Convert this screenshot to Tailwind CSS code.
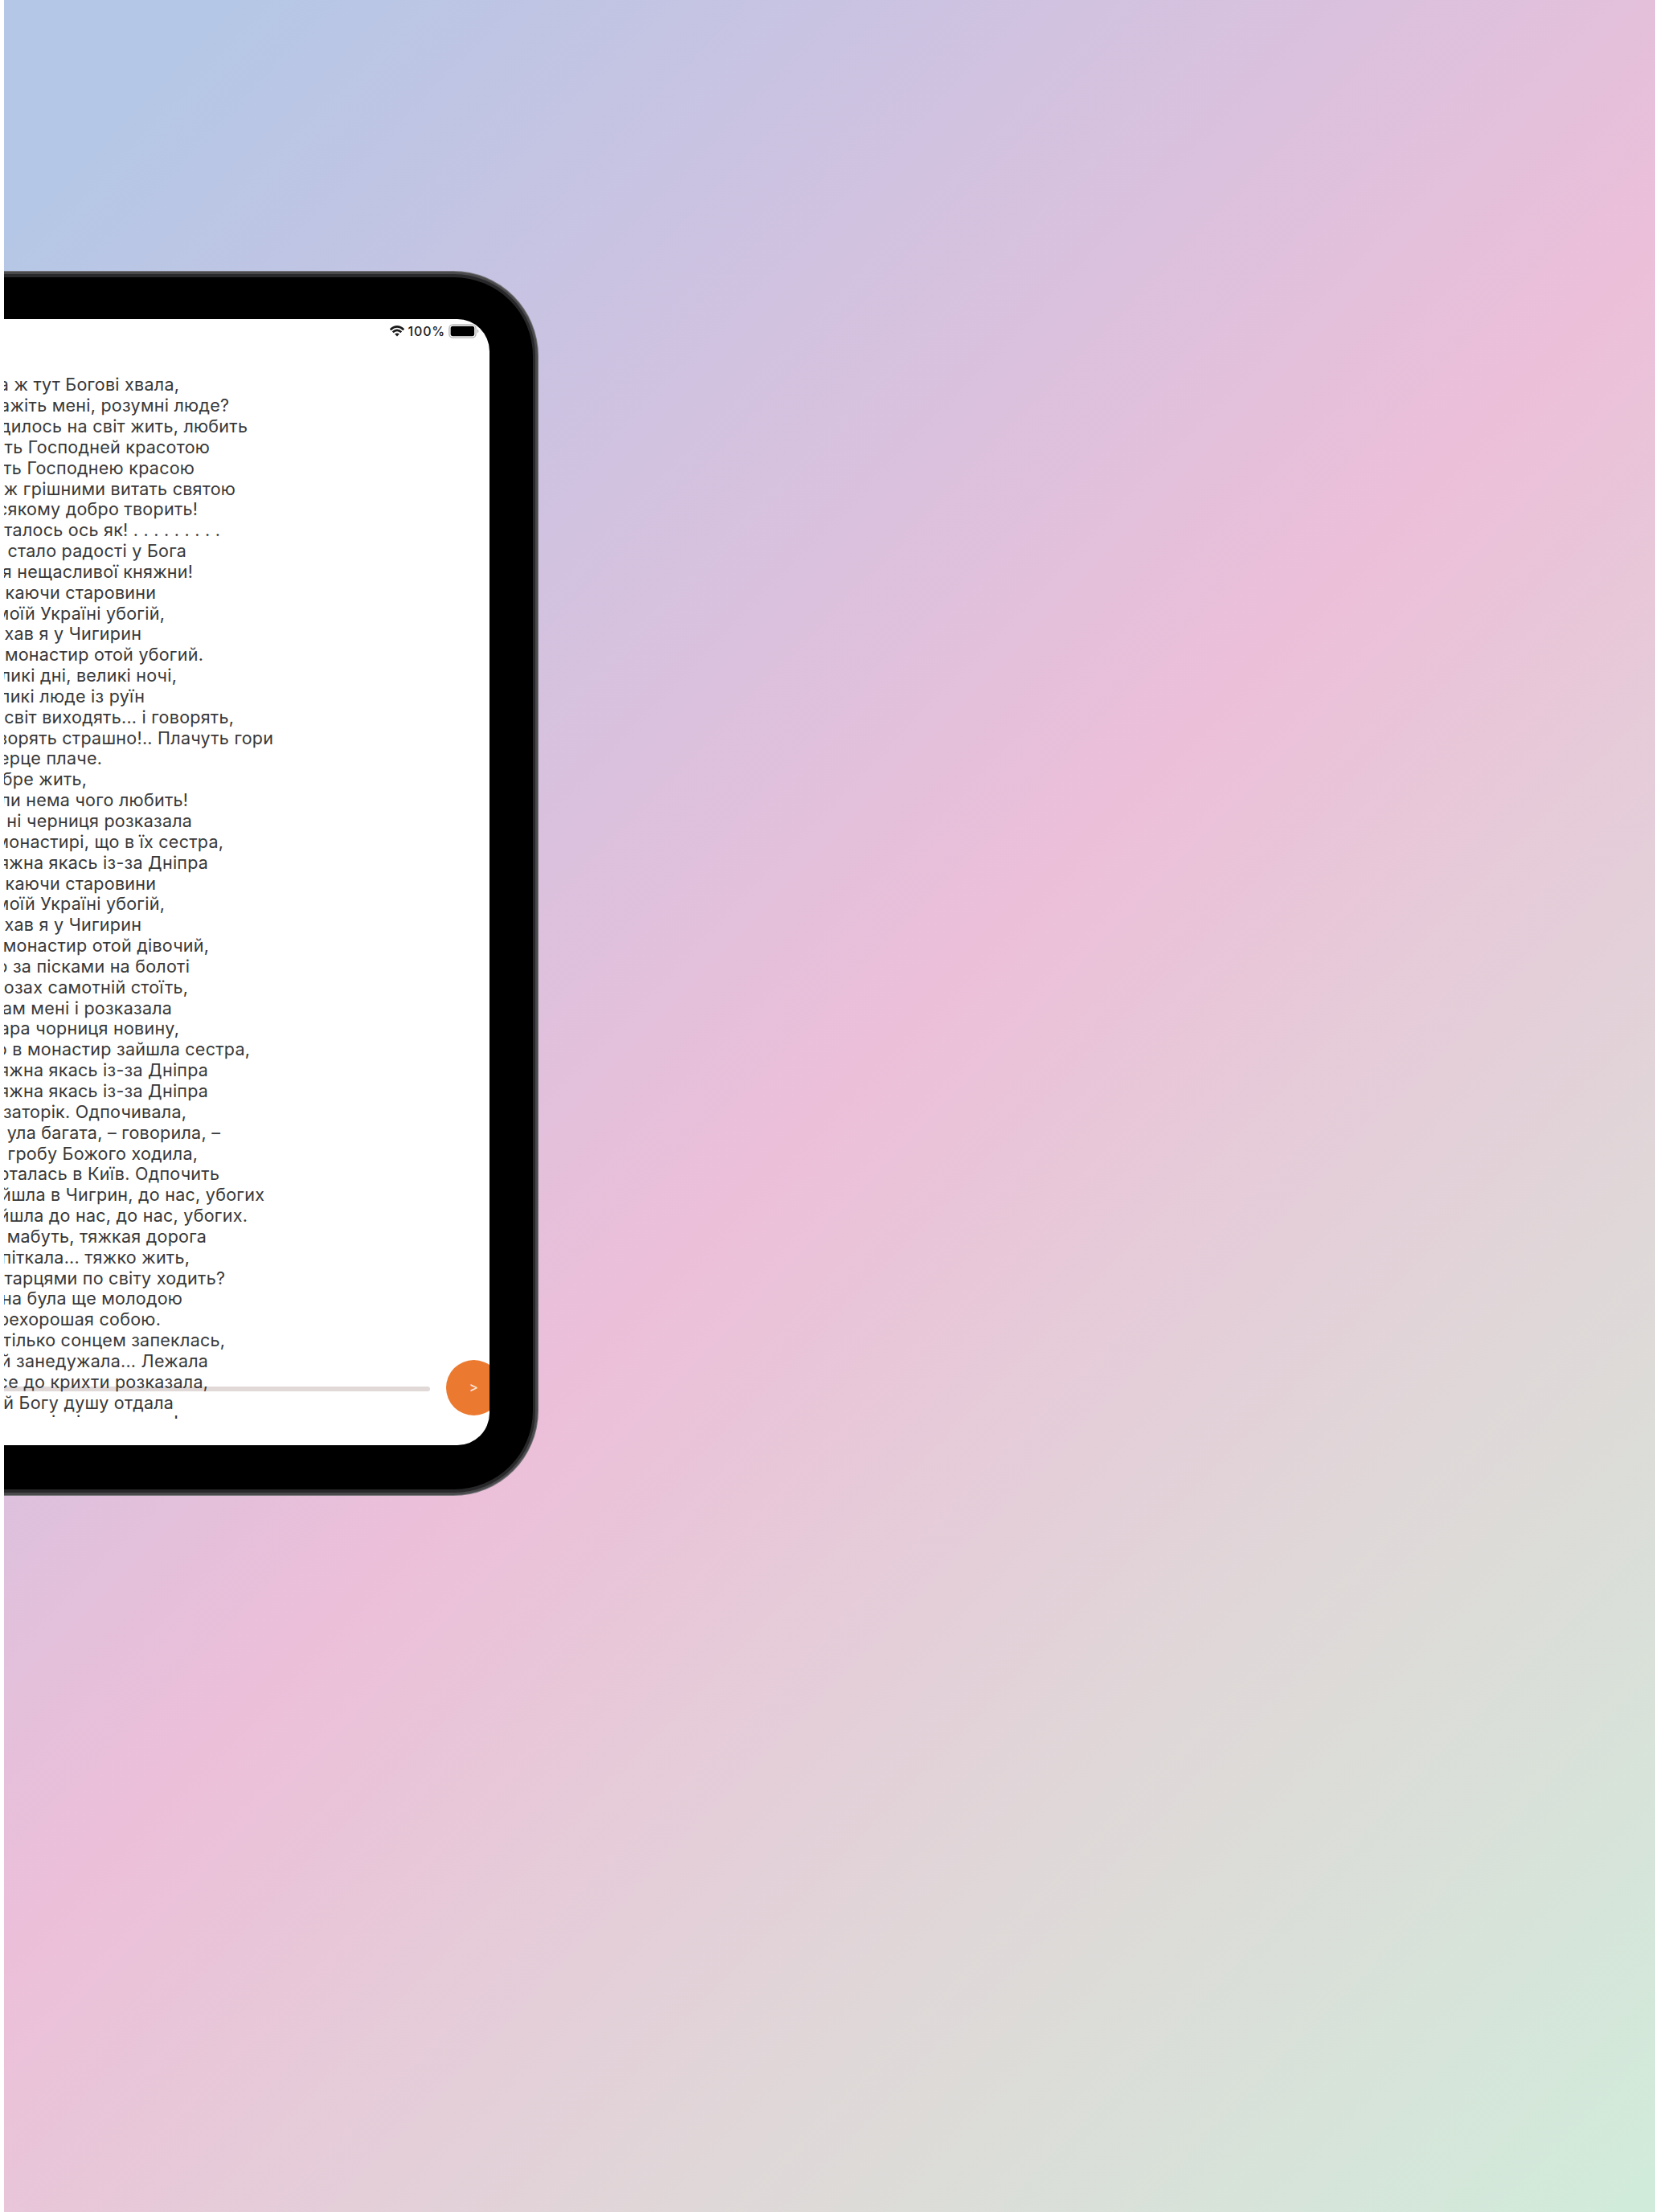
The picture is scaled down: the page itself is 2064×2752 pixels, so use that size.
<!DOCTYPE html>
<html lang="uk">
<head>
<meta charset="utf-8">
<title>Княжна</title>
<script src="https://cdn.jsdelivr.net/npm/@tailwindcss/browser@4"></script>
</head>
<body class="bg-white">
<main class="w-[2064px] h-[2752px] pl-[5px] pr-[5px] overflow-hidden">
  <div class="w-full h-full overflow-hidden pt-[337px] bg-[linear-gradient(134deg,#b5c7e6_0%,#b5c7e6_6%,#c9c3e2_22%,#ecbfd9_50%,#dfd8d8_75%,#d1ebda_99%)]">
    <!-- tablet body, bleeding off the left edge -->
    <div class="relative w-[665px] h-[1524px] rounded-r-[106px] bg-[#77777b] pt-px pb-px pr-[1px]">
      <div class="w-full h-full rounded-r-[105px] bg-[#4a4a4d] pt-[3px] pb-[3px] pr-[3px]">
      <div class="w-full h-full rounded-r-[101px] bg-[#28282a] pt-[4px] pb-[4px] pr-[3px]">
      <div class="w-full h-full rounded-r-[98px] bg-black pt-[52px] pb-[55px] pr-[54px]">
        <div class="relative w-full h-full overflow-hidden rounded-r-[40px] bg-white font-[Inter,sans-serif]">
          <div class="absolute left-0 top-[1328px] w-[530px] h-[6px] rounded-r-[3px] bg-[#e0d9d8]"></div>
          <div class="flex items-center justify-end h-[30px] pr-[12px] gap-[4px] text-[#1a1a1a]">
            <svg class="w-[20px] h-[14px]" viewBox="0 0 19 14" fill="none" stroke="#1a1a1a" stroke-width="2.6"><path d="M1.2 5.2Q9.500-2.400 17.800 5.200M4.200 8.300Q9.500 3.600 14.800 8.300"/><path d="M9.500 13.500L6.600 10.500Q9.500 8.400 12.400 10.500Z" fill="#1a1a1a" stroke="none"/></svg>
            <span class="text-[16px] leading-none font-medium tracking-[0.8px]">100%</span>
            <svg class="w-[39px] h-[18px]" viewBox="0 0 37 17" preserveAspectRatio="none"><rect x=".8" y=".8" width="31.500" height="15.400" rx="4.500" fill="none" stroke="#b5b5b5" stroke-width="1.300"/><rect x="2.500" y="2.600" width="28" height="11.800" rx="2.500" fill="#000"/><path d="M34 6v5q3-2.500 0-5" fill="#b0b0b0"/></svg>
          </div>
          <div id="poem" class="relative pt-[39.3px] text-[21.5px] leading-[25.85px] text-[#383838] whitespace-pre"></div>
          <!-- next verse line, only its tops show above the text area's lower edge -->
          <div class="absolute left-0 top-[1362px] w-[300px] h-[6px] overflow-hidden text-[21.5px] leading-[25.84px] text-[#333]">
            <span class="absolute left-[59px] top-[-2px]">і</span><span class="absolute left-[90px] top-[-2px]">і</span><span class="absolute left-[211px] top-[-2px]">!</span>
          </div>
          <div class="absolute left-[550px] top-[1295px] size-[69px] rounded-full bg-[#eb7a30] text-[#fbe6d8] text-[17px] flex items-center justify-center font-medium">&gt;</div>
        </div>
      </div>
      </div>
      </div>
    </div>
  </div>
</main>
<script>
// verse text and the x where each line ends
const lines = [
["а ж тут Богові хвала,",222],["ажіть мені, розумні люде?",284],["дилось на світ жить, любить",307],["ть Господней красотою",260],["ть Господнею красою",241],["ж грішними витать святою",292],["сякому добро творить!",245],["сталось ось як! . . . . . . . . .",273],["стало радості у Бога",231],["я нещасливої княжни!",239],["каючи старовини",193],["моїй Україні убогій,",204],["хав я у Чигирин",175],["монастир отой убогий.",252],["ликі дні, великі ночі,",219],["ликі люде із руїн",179],["світ виходять... і говорять,",290],["ворять страшно!.. Плачуть гори",339],["ерце плаче.",126],["бре жить,",107],["ли нема чого любить!",233],["ні черниця розказала",238],["монастирі, що в їх сестра,",277],["яжна якась із-за Дніпра",258],["каючи старовини",193],["моїй Україні убогій,",204],["хав я у Чигирин",175],["монастир отой дівочий,",259],["о за пісками на болоті",235],["озах самотній стоїть,",233],["ам мені і розказала",213],["ара чорниця новину,",222],["о в монастир зайшла сестра,",310],["яжна якась із-за Дніпра",258],["яжна якась із-за Дніпра",258],["заторік. Одпочивала,",231],["ула багата, – говорила, –",273],["гробу Божого ходила,",245],["рталась в Київ. Одпочить",272],["йшла в Чигрин, до нас, убогих",328],["йшла до нас, до нас, убогих.",307],["мабуть, тяжкая дорога",256],["піткала... тяжко жить,",235],["тарцями по світу ходить?",279],["на була ще молодою",226],["рехорошая собою.",199],["тілько сонцем запеклась,",279],["й занедужала... Лежала",258],["се до крихти розказала,",258],["й Богу душу отдала",215]];
const poem = document.getElementById('poem');
for (const [text, end] of lines) {
  const row = document.createElement('div');
  row.className = 'flex justify-end h-[25.85px] tracking-[0.25px]';
  row.style.width = (end - 3.8) + 'px';
  row.textContent = text;
  poem.append(row);
}
</script>
</body>
</html>
